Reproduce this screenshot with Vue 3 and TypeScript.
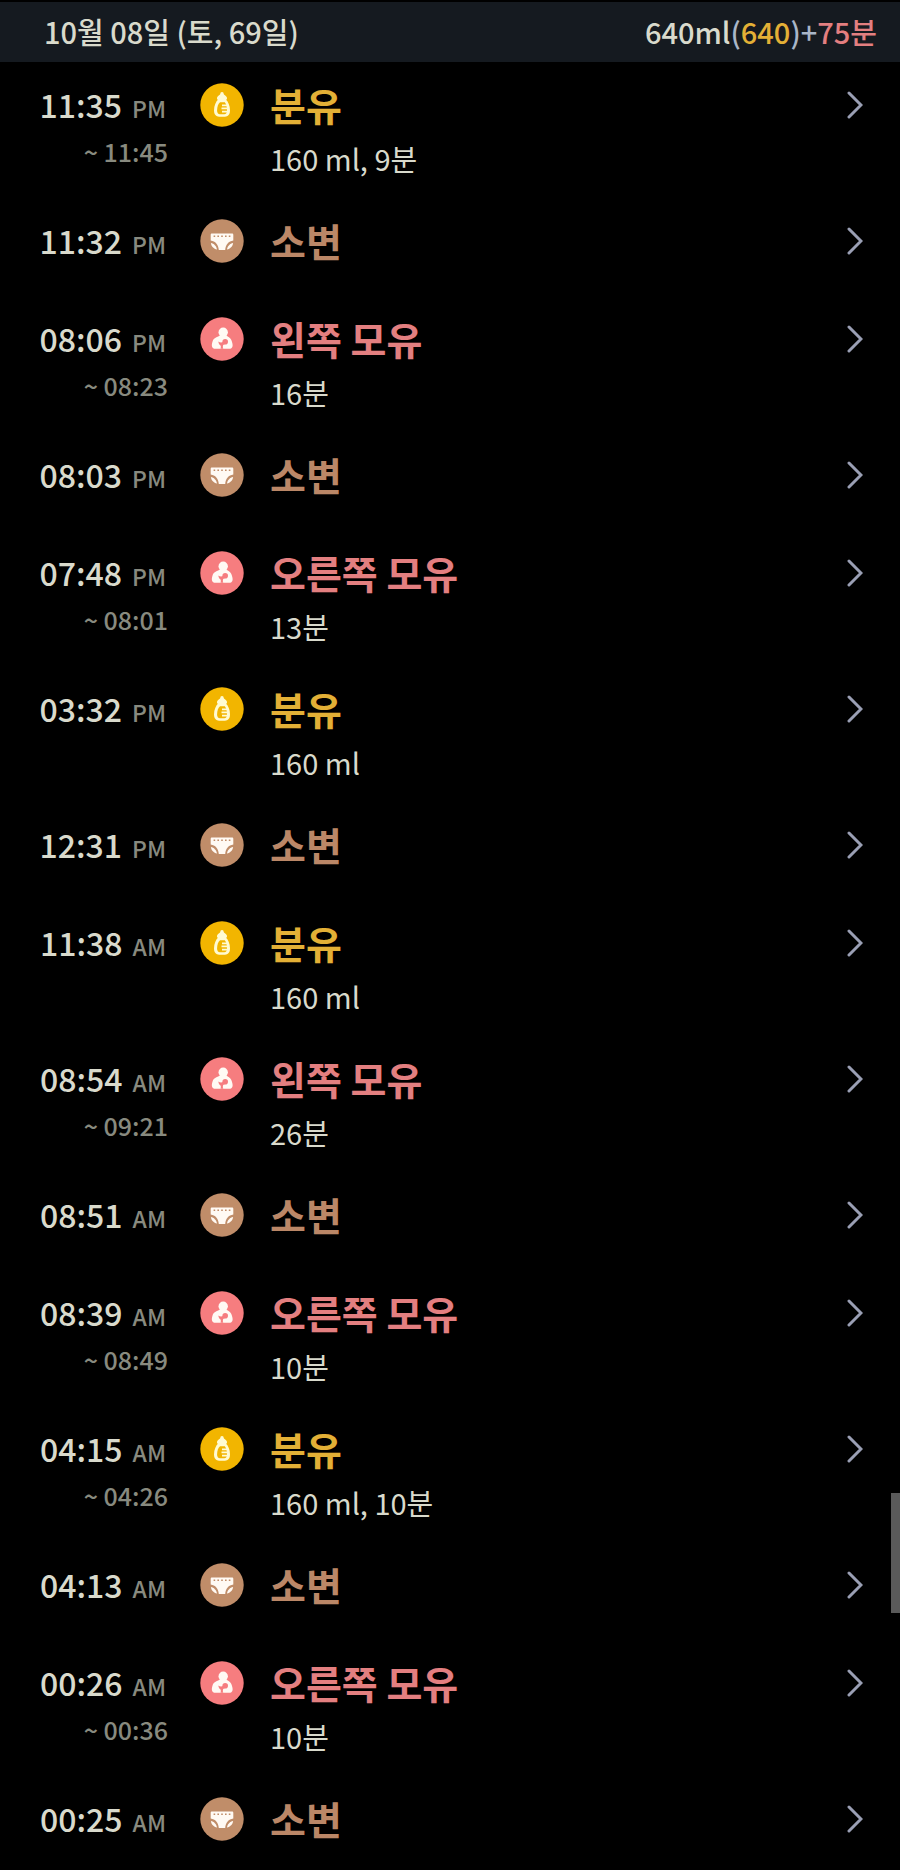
<script setup lang="ts">
type Kind = 'formula' | 'urine' | 'breast'

interface LogEntry {
  time: string
  meridiem: 'AM' | 'PM'
  end?: string
  kind: Kind
  title: string
  detail?: string
}

const entries: LogEntry[] = [
  { time: '11:35', meridiem: 'PM', end: '11:45', kind: 'formula', title: '분유', detail: '160 ml, 9분' },
  { time: '11:32', meridiem: 'PM', kind: 'urine', title: '소변' },
  { time: '08:06', meridiem: 'PM', end: '08:23', kind: 'breast', title: '왼쪽 모유', detail: '16분' },
  { time: '08:03', meridiem: 'PM', kind: 'urine', title: '소변' },
  { time: '07:48', meridiem: 'PM', end: '08:01', kind: 'breast', title: '오른쪽 모유', detail: '13분' },
  { time: '03:32', meridiem: 'PM', kind: 'formula', title: '분유', detail: '160 ml' },
  { time: '12:31', meridiem: 'PM', kind: 'urine', title: '소변' },
  { time: '11:38', meridiem: 'AM', kind: 'formula', title: '분유', detail: '160 ml' },
  { time: '08:54', meridiem: 'AM', end: '09:21', kind: 'breast', title: '왼쪽 모유', detail: '26분' },
  { time: '08:51', meridiem: 'AM', kind: 'urine', title: '소변' },
  { time: '08:39', meridiem: 'AM', end: '08:49', kind: 'breast', title: '오른쪽 모유', detail: '10분' },
  { time: '04:15', meridiem: 'AM', end: '04:26', kind: 'formula', title: '분유', detail: '160 ml, 10분' },
  { time: '04:13', meridiem: 'AM', kind: 'urine', title: '소변' },
  { time: '00:26', meridiem: 'AM', end: '00:36', kind: 'breast', title: '오른쪽 모유', detail: '10분' },
  { time: '00:25', meridiem: 'AM', kind: 'urine', title: '소변' },
]
</script>

<template>
  <main class="log">
    <header class="day">
      <h1 class="date">10월 08일 (토, 69일)</h1>
      <p class="total">640ml<span class="sign">(</span><span class="formula">640</span><span class="sign">)+</span><span class="breast">75분</span></p>
    </header>

    <ul class="entries">
      <li v-for="entry in entries" :key="entry.time + entry.meridiem">
        <button type="button" class="entry" :class="entry.kind">
          <span class="when">
            <span class="start">
              <span class="clock">{{ entry.time }}</span>
              <span class="meridiem">{{ entry.meridiem }}</span>
            </span>
            <span v-if="entry.end" class="end">~ {{ entry.end }}</span>
          </span>

          <svg class="badge" viewBox="0 0 44 44" aria-hidden="true">
            <circle class="disc" cx="22" cy="22" r="21.7" />
            <g v-if="entry.kind === 'formula'">
              <path class="cream" d="M22 9c1.2 0 1.700.9 1.700 2 .2 1.200 2.900 1.600 3.300 3.700.2 1.200-.4 1.900-1.200 2.300h-7.600c-.8-.4-1.400-1.100-1.200-2.300.4-2.100 3.100-2.500 3.300-3.700 0-1.100.5-2 1.700-2Z" />
              <path class="cream" d="M18.500 16h7c2.700 2.500 4.500 6.800 4.500 11.500 0 4-2.200 6.200-5 6.200h-6c-2.800 0-5-2.200-5-6.200 0-4.700 1.800-9 4.500-11.500Z" />
              <path class="disc" d="M20 19.300h4.800c1.400 1.500 2.200 4.700 2.200 8.200 0 2.400-1 3.800-2.700 3.800h-4.400c-1.800 0-2.800-1.400-2.800-3.800 0-3.500 1-6.700 2.900-8.200Z" />
              <path class="cream" d="M22 21.500h5v1.700h-5ZM21.500 24.600h6v1.700h-6ZM22 27.700h5.500v1.700H22Z" />
            </g>
            <g v-else-if="entry.kind === 'urine'">
              <path class="white" d="M12 14.500h20c.8 0 1.300.5 1.300 1.300v5.700c-4.700.8-7.600 3.800-8.100 9.500h-6.400c-.5-5.700-3.400-8.700-8.100-9.500v-5.700c0-.8.5-1.300 1.300-1.300Z" />
              <path class="white" d="M10.900 24c3 .5 5.600 3 6.100 6.500-3.200-.6-5.700-3-6.100-6.500ZM33.100 24c-3 .5-5.600 3-6.100 6.500 3.200-.6 5.700-3 6.100-6.500Z" />
              <path class="disc" d="M13.600 16.500h1.600V18h-1.600ZM17.400 16.500H19V18h-1.600ZM21.200 16.500h1.600V18h-1.600ZM25 16.500h1.600V18H25ZM28.800 16.500h1.600V18h-1.600Z" />
            </g>
            <g v-else>
              <circle class="white" cx="23.200" cy="15.300" r="4.700" />
              <path class="white" d="M20 18.300h6.400c.7 1.600 4.400 1.900 5.300 5.700.5 1.800 1.100 3.200.9 4.900-.3 2-1.700 2.800-3.600 2.800H15.700c-2 0-3.600-.8-3.800-2.800-.2-1.700.3-3.100.8-4.900 1-3.800 6.500-4.100 7.300-5.700Z" />
              <circle class="disc" cx="25.200" cy="24.700" r="2.800" />
              <path class="disc" d="M18.400 24.400c1.200 1 2.900 1.300 4.600.6l1.800 2c-1 .6-1.700 1-1.900 1.900-.2.900 0 2 .4 2.800h-2.700c.2-1.300.5-2.600-.3-3.400-1-.9-1.900-1.900-1.900-3.900Z" />
            </g>
          </svg>

          <span class="what">
            <span class="title">{{ entry.title }}</span>
            <span v-if="entry.detail" class="detail">{{ entry.detail }}</span>
          </span>

          <svg class="chevron" viewBox="0 0 16 28" aria-hidden="true">
            <path d="M2 2 14 14 2 26" />
          </svg>
        </button>
      </li>
    </ul>

    <div class="thumb" aria-hidden="true"></div>
  </main>
</template>

<style>
body {
  margin: 0;
  background: #000;
}
</style>

<style scoped>
.log {
  --ink: #d9dacc;
  --muted: #888a7f;
  --slate: #a9b6c8;
  --formula: #e3b036;
  --breast: #e37f80;
  --urine: #bb8767;
  position: relative;
  box-sizing: border-box;
  min-height: 100vh;
  padding-top: 2px;
  overflow: hidden;
  background: #000;
  color: var(--ink);
  font-family: "Noto Sans CJK KR", "Noto Sans", sans-serif;
  font-weight: 500;
}

.day {
  display: flex;
  align-items: center;
  justify-content: space-between;
  height: 60px;
  padding: 0 23px 2px 44px;
  box-sizing: border-box;
  background: #151a20;
}

.date,
.total {
  margin: 0;
  font-size: 29px;
  font-weight: 500;
  line-height: 40px;
}

.sign {
  color: var(--slate);
}

.total .formula {
  color: var(--formula);
}

.total .breast {
  color: var(--breast);
}

.entries {
  margin: 0;
  padding: 0;
  list-style: none;
}

.entry {
  display: flex;
  align-items: flex-start;
  box-sizing: border-box;
  width: 100%;
  min-height: 98px;
  padding: 21px 37px 0 0;
  border: 0;
  background: none;
  color: inherit;
  font: inherit;
  text-align: left;
  cursor: pointer;
}

.entry:has(.detail) {
  min-height: 136px;
}

.when {
  display: flex;
  flex: none;
  flex-direction: column;
  align-items: flex-end;
  width: 168px;
}

.start {
  display: flex;
  align-items: baseline;
  gap: 10px;
  padding-right: 2px;
}

.clock {
  font-size: 32px;
  line-height: 42px;
}

.meridiem {
  color: var(--muted);
  font-size: 23px;
  line-height: 32px;
}

.end {
  margin-top: 6px;
  color: var(--muted);
  font-size: 25px;
  line-height: 40px;
}

.badge {
  flex: none;
  width: 44px;
  height: 44px;
  margin-left: 32px;
}

.entry.formula .disc {
  fill: #f2b500;
}

.entry.urine .disc {
  fill: #c08d69;
}

.entry.breast .disc {
  fill: #f67d7f;
}

.cream {
  fill: #fffbd2;
}

.white {
  fill: #fffaf4;
}

.what {
  display: flex;
  flex: 1;
  flex-direction: column;
  min-width: 0;
  margin-left: 26px;
}

.title {
  font-size: 39px;
  font-weight: 700;
  line-height: 42px;
}

.entry.formula .title {
  color: var(--formula);
}

.entry.urine .title {
  color: var(--urine);
}

.entry.breast .title {
  color: var(--breast);
}

.detail {
  margin-top: 6px;
  font-size: 29px;
  font-weight: 400;
  line-height: 54px;
}

.chevron {
  flex: none;
  width: 16px;
  height: 28px;
  margin-top: 8px;
}

.chevron path {
  fill: none;
  stroke: #9a9fb4;
  stroke-width: 3;
  stroke-linecap: round;
}

.thumb {
  position: absolute;
  top: 1493px;
  right: 0;
  width: 9px;
  height: 120px;
  background: #5a5a5a;
}
</style>
